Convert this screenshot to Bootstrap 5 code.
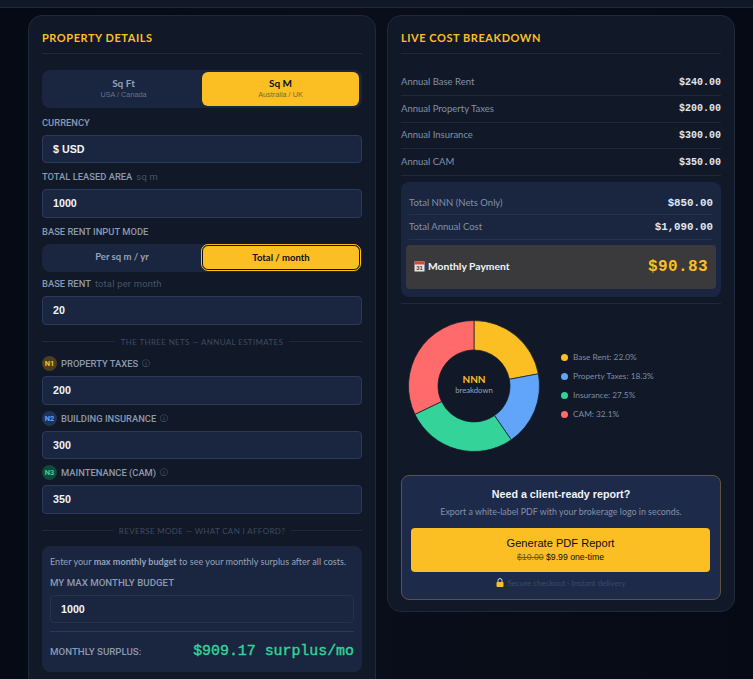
<!DOCTYPE html>
<html lang="en">
<head>
    <meta charset="UTF-8">
    <meta name="viewport" content="width=device-width, initial-scale=1.0">
    <title>NNN Lease Calculator</title>
    <link href="https://cdn.jsdelivr.net/npm/bootstrap@5.3.0/dist/css/bootstrap.min.css" rel="stylesheet">
    <script src="https://cdn.jsdelivr.net/npm/bootstrap@5.3.0/dist/js/bootstrap.bundle.min.js"></script>
    <style>
        html, body { height: 679px; overflow: hidden; }
        body {
            background: linear-gradient(90deg, #060a14 0, #0a0e1a 50%, #060a14 100%);
            font-family: Lato, "Noto Sans", sans-serif;
            color: #94a3b8;
        }
        .top-strip { height: 8px; background: #111827; border-bottom: 1px solid #1e293b; }
        .page-wrap { padding: 7px 0 0 28px; gap: 11px; }
        .panel {
            width: 348px;
            flex: none;
            background: #111827;
            border: 1px solid #1e293b;
            border-radius: 14px;
            padding: 14px 13px;
        }
        .panel-left { height: 700px; }
        .panel-right { height: 597px; }
        .panel-title {
            font-size: 11px;
            font-weight: 700;
            letter-spacing: .55px;
            line-height: 16px;
            color: #fbbf24;
            padding-bottom: 7px;
            margin: 0 0 16px;
            border-bottom: 1px solid #1e293b;
        }
        .unit-toggle { background: #1a2540; border-radius: 8px; padding: 2px 3px; height: 38px; margin-bottom: 8px; }
        .unit-toggle > div { flex: 1; border-radius: 6px; text-align: center; font-size: 10px; font-weight: 700; line-height: 12px; padding-top: 5px; color: #94a3b8; }
        .unit-toggle small { display: block; font-family: "Liberation Sans", sans-serif; font-size: 7.3px; font-weight: 400; line-height: 11px; color: #64748b; }
        .unit-toggle .is-on { background: #fbbf24; color: #0a0e1a; }
        .unit-toggle .is-on small { color: #7a6a30; }
        .mode-toggle { background: #1a2540; border-radius: 8px; height: 28px; margin-bottom: 5.7px; }
        .mode-toggle > div { flex: 1; border-radius: 6px; text-align: center; font-size: 9.5px; font-weight: 700; line-height: 26px; color: #94a3b8; }
        .mode-toggle .is-on { flex: none; width: 158px; height: 25px; background: #fbbf24; color: #0a0e1a; border: 1px solid #0a0e1a; outline: 1px solid #fbbf24; line-height: 23px; margin: 1px 2px 2px 0; }
        .field-label {
            display: flex;
            align-items: center;
            gap: 4px;
            font-family: Roboto, sans-serif;
            font-size: 9.4px;
            font-weight: 500;
            line-height: 13px;
            color: #8b9ab0;
            margin: 0 0 6px;
            height: 13px;
        }
        .field-label span { font-weight: 400; color: #475569; letter-spacing: .2px; }
        .field-label .tip { color: #56657c; font-size: 8px; font-family: "DejaVu Sans", sans-serif; }
        .dark-input {
            background: #1a2540;
            border: 1px solid #2a3a5c;
            border-radius: 4px;
            height: 28.4px;
            padding: 0 10px;
            line-height: 26px;
            font-family: "Liberation Sans", sans-serif;
            font-size: 10.7px;
            font-weight: 700;
            color: #f1f5f9;
            margin-bottom: 7px;
        }
        .field-label .net-badge {
            width: 15px;
            height: 15px;
            border-radius: 50%;
            font-size: 7.5px;
            font-weight: 700;
            line-height: 15px;
            text-align: center;
            letter-spacing: 0;
        }
        .net-badge.b1 { background: #4a4020; color: #fbbf24; }
        .net-badge.b2 { background: #1e3358; color: #60a5fa; }
        .net-badge.b3 { background: #0f4a3c; color: #34d399; }
        .rule-text {
            display: flex;
            align-items: center;
            gap: 6px;
            font-size: 8px;
            letter-spacing: .35px;
            line-height: 12px;
            color: #3d4b63;
            margin: 11px 0 9.5px;
        }
        .rule-text::before, .rule-text::after { content: ""; flex: 1; border-top: 1px solid #1e293b; }
        .rev-box { background: #1a2540; border-radius: 8px; padding: 9px 8px 8px; height: 126px; }
        .rev-box p { font-size: 9.1px; line-height: 14px; margin: 0 0 7px; color: #94a3b8; white-space: nowrap; }
        .rev-box .field-label { margin-bottom: 5.5px; font-size: 9.7px; }
        .rev-box .dark-input { margin-bottom: 8px; border-color: #24324f; }
        .surplus-row { border-top: 1px solid #2a3a5c; padding-top: 8px; align-items: center; }
        .mono-val { font-family: "Liberation Mono", monospace; font-weight: 700; }
        .surplus-val { font-size: 14.9px; color: #34d399; font-weight: 400; -webkit-text-stroke: .4px #34d399; }
        .cost-row { display: flex; justify-content: space-between; align-items: center; border-bottom: 1px solid #1e293b; height: 26.6px; font-size: 9.5px; color: #8391a6; }
        .cost-row .mono-val { font-size: 10px; color: #e2e8f0; }
        .cost-list { margin-top: -.5px; }
        .total-box { background: #1a2540; border-radius: 8px; height: 115px; margin-top: 6px; padding: 9px 8px 0; }
        .total-box .cost-row { border-color: #24324f; height: 24.5px; }
        .total-box .cost-row .mono-val { font-size: 10.8px; }
        .pay-box { background: #3a3a3c; border-radius: 4px; height: 44px; margin: 5.5px -3px 0; padding: 0 8px 1px; display: flex; justify-content: space-between; align-items: center; }
        .pay-label { display: flex; align-items: center; gap: 3px; font-size: 10.3px; font-weight: 700; color: #f1f5f9; }
        .pay-val { font-size: 16px; color: #fbbf24; letter-spacing: .4px; }
        .chart-block { border-top: 1px solid #1e293b; margin-top: 6px; height: 172px; padding: 16px 0 0 7px; gap: 21px; }
        .chart-box { position: relative; width: 132px; height: 132px; flex: none; }
        .chart-mid { position: absolute; inset: 0; display: flex; flex-direction: column; align-items: center; justify-content: center; padding-bottom: 3px; }
        .chart-mid b { font-size: 10px; line-height: 12px; color: #fbbf24; }
        .chart-mid span { font-size: 7.7px; line-height: 10px; color: #94a3b8; }
        .legend-list { list-style: none; margin: 28px 0 0; padding: 0; font-size: 8.3px; color: #7f8ca1; }
        .legend-list li { display: flex; align-items: center; gap: 5px; height: 19px; }
        .legend-list i { width: 7px; height: 7px; border-radius: 50%; display: block; }
        .report-box { background: #1e2a4a; border: 1px solid #5a5340; border-radius: 8px; height: 125px; text-align: center; padding: 11px 9px 0; }
        .report-box h3 { font-family: "Liberation Sans", sans-serif; font-size: 10.7px; font-weight: 700; line-height: 14px; color: #f1f5f9; margin: 0 0 5px; }
        .report-box p { font-size: 8.9px; line-height: 12px; color: #8391a6; margin: 0 0 10px; }
        .pdf-btn { display: block; background: #fbbf24; border-radius: 4px; height: 44px; color: #0a0e1a; font-family: "Liberation Sans", sans-serif; padding-top: 8px; margin: 0 1px 0 0; }
        .pdf-btn b { display: block; font-weight: 400; font-size: 11.1px; line-height: 15px; }
        .pdf-btn span { display: block; font-size: 8.7px; line-height: 12px; }
        .pdf-btn s { color: #6b5a20; }
        .secure-note { display: flex; justify-content: center; align-items: center; gap: 3px; font-size: 8px; color: #3d4b63; margin-top: 4px; line-height: 14px; }
    </style>
</head>
<body>
    <div class="top-strip"></div>
    <div class="d-flex page-wrap">
        <div class="panel panel-left">
            <h2 class="panel-title">PROPERTY DETAILS</h2>
            <div class="d-flex unit-toggle">
                <div>Sq Ft<small>USA / Canada</small></div>
                <div class="is-on">Sq M<small>Australia / UK</small></div>
            </div>
            <label class="field-label">CURRENCY</label>
            <div class="dark-input">$ USD</div>
            <label class="field-label">TOTAL LEASED AREA <span>sq m</span></label>
            <div class="dark-input">1000</div>
            <label class="field-label">BASE RENT INPUT MODE</label>
            <div class="d-flex mode-toggle">
                <div>Per sq m / yr</div>
                <div class="is-on">Total / month</div>
            </div>
            <label class="field-label">BASE RENT <span>total per month</span></label>
            <div class="dark-input">20</div>
            <div class="rule-text">THE THREE NETS — ANNUAL ESTIMATES</div>
            <label class="field-label"><span class="net-badge b1">N1</span> PROPERTY TAXES <span class="tip">ⓘ</span></label>
            <div class="dark-input">200</div>
            <label class="field-label"><span class="net-badge b2">N2</span> BUILDING INSURANCE <span class="tip">ⓘ</span></label>
            <div class="dark-input">300</div>
            <label class="field-label"><span class="net-badge b3">N3</span> MAINTENANCE (CAM) <span class="tip">ⓘ</span></label>
            <div class="dark-input">350</div>
            <div class="rule-text">REVERSE MODE — WHAT CAN I AFFORD?</div>
            <div class="rev-box">
                <p>Enter your <b>max monthly budget</b> to see your monthly surplus after all costs.</p>
                <label class="field-label">MY MAX MONTHLY BUDGET</label>
                <div class="dark-input">1000</div>
                <div class="d-flex justify-content-between surplus-row">
                    <span class="field-label mb-0">MONTHLY SURPLUS:</span>
                    <span class="mono-val surplus-val">$909.17 surplus/mo</span>
                </div>
            </div>
        </div>

        <div class="panel panel-right">
            <h2 class="panel-title mb-3">LIVE COST BREAKDOWN</h2>
            <div class="cost-list">
                <div class="cost-row"><span>Annual Base Rent</span><span class="mono-val">$240.00</span></div>
                <div class="cost-row"><span>Annual Property Taxes</span><span class="mono-val">$200.00</span></div>
                <div class="cost-row"><span>Annual Insurance</span><span class="mono-val">$300.00</span></div>
                <div class="cost-row"><span>Annual CAM</span><span class="mono-val">$350.00</span></div>
            </div>
            <div class="total-box">
                <div class="cost-row"><span>Total NNN (Nets Only)</span><span class="mono-val">$850.00</span></div>
                <div class="cost-row"><span>Total Annual Cost</span><span class="mono-val">$1,090.00</span></div>
                <div class="pay-box">
                    <span class="pay-label">
                        <svg width="11" height="11" viewBox="0 0 11 11"><rect x="0.5" y="0.5" width="10" height="10" fill="#e4e4ea"/><rect x="0.5" y="0.5" width="10" height="3" fill="#d9472f"/><text x="5.5" y="9.4" text-anchor="middle" font-size="6" font-weight="700" font-family="Liberation Sans" fill="#3a3a3c">31</text></svg>
                        Monthly Payment
                    </span>
                    <span class="mono-val pay-val">$90.83</span>
                </div>
            </div>
            <div class="d-flex align-items-start chart-block">
                <div class="chart-box">
                    <svg id="donut" width="132" height="132" viewBox="0 0 132 132"></svg>
                    <div class="chart-mid"><b>NNN</b><span>breakdown</span></div>
                </div>
                <ul class="legend-list">
                    <li><i style="background:#fbbf24"></i>Base Rent: 22.0%</li>
                    <li><i style="background:#60a5fa"></i>Property Taxes: 18.3%</li>
                    <li><i style="background:#34d399"></i>Insurance: 27.5%</li>
                    <li><i style="background:#ff6b6b"></i>CAM: 32.1%</li>
                </ul>
            </div>
            <div class="report-box">
                <h3>Need a client-ready report?</h3>
                <p>Export a white-label PDF with your brokerage logo in seconds.</p>
                <a class="pdf-btn text-decoration-none" href="#">
                    <b>Generate PDF Report</b>
                    <span><s>$10.00</s> $9.99 one-time</span>
                </a>
                <div class="secure-note">
                    <svg width="8" height="9" viewBox="0 0 8 9"><path d="M2 4V2.5a2 2 0 0 1 4 0V4" fill="none" stroke="#d8d8d8"/><rect x="0.5" y="4" width="7" height="5" rx="1" fill="#fbbf24"/></svg>
                    Secure checkout · Instant delivery
                </div>
            </div>
        </div>
    </div>

    <script>
        // donut segments
        const parts = [[240, '#fbbf24'], [200, '#60a5fa'], [300, '#34d399'], [350, '#ff6b6b']];
        const total = 1090;
        const cx = 66, cy = 66, r1 = 65.5, r0 = 36;
        let a = -Math.PI / 2;
        let html = '';
        parts.forEach(p => {
            const b = a + p[0] / total * Math.PI * 2;
            const large = b - a > Math.PI ? 1 : 0;
            const pt = (r, t) => (cx + r * Math.cos(t)).toFixed(2) + ' ' + (cy + r * Math.sin(t)).toFixed(2);
            html += `<path d="M${pt(r1, a)} A${r1} ${r1} 0 ${large} 1 ${pt(r1, b)} L${pt(r0, b)} A${r0} ${r0} 0 ${large} 0 ${pt(r0, a)} Z" fill="${p[1]}" stroke="#111827" stroke-width=".7"/>`;
            a = b;
        });
        document.getElementById('donut').innerHTML = html;
    </script>
</body>
</html>
